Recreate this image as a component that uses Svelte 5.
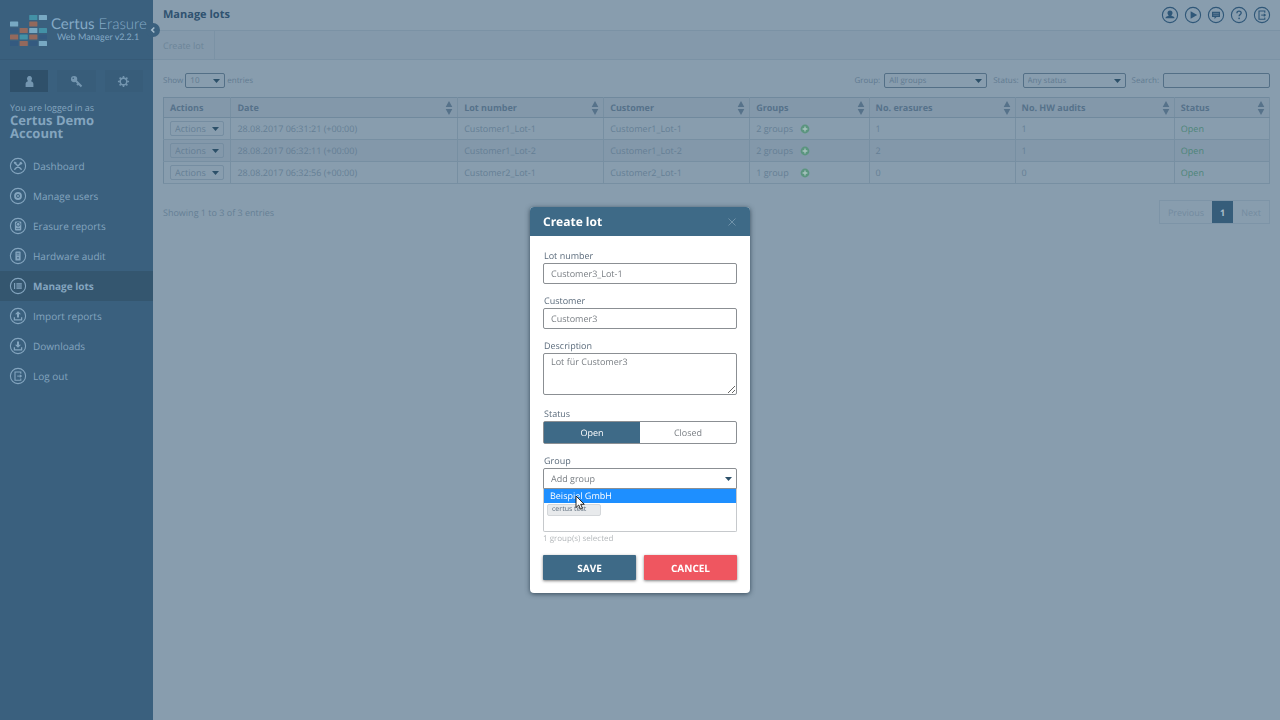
<script>
  const nav = [
    { label: 'Dashboard', icon: 'tools' },
    { label: 'Manage users', icon: 'users' },
    { label: 'Erasure reports', icon: 'drive' },
    { label: 'Hardware audit', icon: 'tower' },
    { label: 'Manage lots', icon: 'lots', active: true },
    { label: 'Import reports', icon: 'upload' },
    { label: 'Downloads', icon: 'download' },
    { label: 'Log out', icon: 'logout' },
  ];

  const topIcons = [
    { label: 'Profile', icon: 'person' },
    { label: 'Videos', icon: 'play' },
    { label: 'Messages', icon: 'chat' },
    { label: 'Help', icon: 'help' },
    { label: 'Log out', icon: 'logout' },
  ];

  const columns = [
    { label: 'Actions', width: 6.1, fixed: true },
    { label: 'Date', width: 20.5 },
    { label: 'Lot number', width: 13.2 },
    { label: 'Customer', width: 13.2 },
    { label: 'Groups', width: 10.8 },
    { label: 'No. erasures', width: 13.2 },
    { label: 'No. HW audits', width: 14.4 },
    { label: 'Status', width: 8.6 },
  ];

  const lots = [
    { date: '28.08.2017 06:31:21 (+00:00)', lot: 'Customer1_Lot-1', customer: 'Customer1_Lot-1', groups: '2 groups', erasures: 1, audits: 1 },
    { date: '28.08.2017 06:32:11 (+00:00)', lot: 'Customer1_Lot-2', customer: 'Customer1_Lot-2', groups: '2 groups', erasures: 2, audits: 1 },
    { date: '28.08.2017 06:32:56 (+00:00)', lot: 'Customer2_Lot-1', customer: 'Customer2_Lot-1', groups: '1 group', erasures: 0, audits: 0 },
  ];

  // column, row, colour
  const bricks = [
    [2, 0, '#4391a6'], [3, 0, '#78a9c3'],
    [0, 1, '#78a9c3'], [2, 1, '#93695d'],
    [0, 2, '#365c80'], [1, 2, '#93695d'], [2, 2, '#78a9c3'], [3, 2, '#4391a6'],
    [0, 3, '#93695d'], [1, 3, '#4391a6'], [2, 3, '#93695d'], [3, 3, '#345a80'],
    [0, 4, '#345a80'], [1, 4, '#93695d'], [2, 4, '#345a80'], [3, 4, '#78a9c3'],
  ];

  let lotNumber = $state('Customer3_Lot-1');
  let customer = $state('Customer3');
  let description = $state('Lot für Customer3');
  let status = $state('open');
</script>

{#snippet glyph(name)}
  <svg class="glyph" viewBox="0 0 18 18" aria-hidden="true">
    <circle cx="9" cy="9" r="7.6" fill="none" stroke="currentColor" stroke-width="1.1" />
    {#if name === 'tools'}
      <path d="M6 6l6.2 6.2M12.2 5.8L5.8 12.2" stroke="currentColor" stroke-width="1.4" stroke-linecap="round" />
      <path d="M4.6 5.6l1.2-1.2 2 1.3-1.6 1.9zM10.6 5.4l1.6-1-.3 1.7 1.7-.2-1.1 1.6-1.6.1z" fill="currentColor" />
    {:else if name === 'users'}
      <circle cx="9" cy="9" r="3.9" fill="currentColor" />
      <circle cx="9" cy="9" r="1.7" fill="#6f93ad" stroke="#3a607e" stroke-width=".8" />
    {:else if name === 'drive'}
      <rect x="5.9" y="4.4" width="6.4" height="9.2" rx="1" fill="currentColor" />
      <circle cx="9.2" cy="7.3" r="1.9" fill="none" stroke="#3a607e" stroke-width=".9" />
      <path d="M7 11.5h4" stroke="#3a607e" stroke-width=".6" />
    {:else if name === 'tower'}
      <rect x="6.4" y="4.4" width="5.2" height="9.2" rx=".6" fill="currentColor" />
      <path d="M7.6 6.4h2.8M7.6 8h2.8" stroke="#3a607e" stroke-width=".7" />
      <circle cx="9" cy="10.8" r=".9" fill="#3a607e" />
    {:else if name === 'lots'}
      <path d="M5.6 6v6" stroke="currentColor" stroke-width="1.1" />
      <path d="M7.4 6h5.4v6H7.4z" fill="currentColor" opacity=".75" />
      <path d="M7.4 8h5.4M7.4 10h5.4" stroke="#34586f" stroke-width=".4" />
    {:else if name === 'upload'}
      <path d="M9 4.2l3 3.1h-2v3.2H8V7.3H6z" fill="currentColor" />
      <path d="M5.4 10.2v2.6h7.2v-2.6" fill="none" stroke="currentColor" stroke-width="1.3" />
    {:else if name === 'download'}
      <path d="M9 10.8l3-3.1h-2V4.4H8v3.3H6z" fill="currentColor" />
      <path d="M5.4 10.2v2.6h7.2v-2.6" fill="none" stroke="currentColor" stroke-width="1.3" />
    {:else if name === 'logout'}
      <path d="M11.8 6.8V5H6v8.2h5.8v-1.8" fill="none" stroke="currentColor" stroke-width="1.1" />
      <path d="M8.2 9.1h3" stroke="currentColor" stroke-width="1" />
      <path d="M10.8 7.3l2.4 1.8-2.4 1.8z" fill="currentColor" />
    {:else if name === 'person'}
      <path d="M9 4.4a2.500 2.500 0 0 1 2.500 2.500c0 1-.5 1.800-1 2.300l.1.800c1.800.2 2.900.8 2.900 2.300h-9c0-1.500 1.100-2.100 2.900-2.300l.1-.8c-.5-.5-1-1.300-1-2.300A2.500 2.500 0 0 1 9 4.400z" fill="currentColor" />
    {:else if name === 'play'}
      <path d="M6.600 5.200L13.200 9l-6.600 3.800z" fill="currentColor" />
    {:else if name === 'chat'}
      <path d="M5 5.800h8v5.200H9.500l-2 1.900V11H5z" fill="currentColor" />
      <path d="M6.200 7.400h5.600M6.200 9.200h5.600" stroke="#889dae" stroke-width=".5" />
    {:else if name === 'help'}
      <path d="M6.900 7.200c0-1.300.9-2 2.100-2s2.200.7 2.200 1.900c0 1.600-2.100 1.500-2.100 3.200" fill="none" stroke="currentColor" stroke-width="1.300" />
      <circle cx="9.100" cy="12.300" r=".85" fill="currentColor" />
    {/if}
  </svg>
{/snippet}

<div class="app">
  <aside class="sidebar">
    <div class="brand">
      <svg class="logo" viewBox="0 0 37 32" aria-hidden="true">
        {#each bricks as [col, row, color]}
          <rect x={col * 9.6} y={row * 6.5} width="8.2" height="5" rx=".6" fill={color} />
        {/each}
      </svg>
      <div class="wordmark">
        <div class="name"><b>Certus</b> Erasure</div>
        <div class="product">Web Manager v2.2.1</div>
      </div>
      <button class="collapse" aria-label="Collapse menu">
        <svg viewBox="0 0 14 14" aria-hidden="true"><path d="M8.300 4.500L5.800 7l2.500 2.500" fill="none" stroke="currentColor" stroke-width="1.600" /></svg>
      </button>
    </div>

    <div class="account">
      <div class="modes">
        <button class="current" aria-label="Account">
          <svg viewBox="0 0 14 14" aria-hidden="true"><path d="M7 1.200a2.700 2.700 0 0 1 2.300 4.200c-.2.500-.5.900-.8 1.200 1.700.4 2.700 1.300 2.700 3V13H2.800V9.600c0-1.700 1-2.600 2.700-3-.3-.3-.6-.7-.8-1.200A2.700 2.700 0 0 1 7 1.200z" fill="currentColor" /></svg>
        </button>
        <button aria-label="Licences">
          <svg viewBox="0 0 14 14" aria-hidden="true">
            <circle cx="4.400" cy="4.400" r="3.400" fill="currentColor" />
            <circle cx="3.500" cy="3.500" r=".9" fill="#3a607e" />
            <path d="M6 6l6.400 6.400M9 9.400l-1.400 1.400" stroke="currentColor" stroke-width="2.200" />
          </svg>
        </button>
        <button aria-label="Settings">
          <svg viewBox="0 0 14 14" aria-hidden="true">
            <circle cx="7" cy="7" r="3.600" fill="none" stroke="currentColor" stroke-width="1.700" />
            <path d="M7 1v2M7 11v2M1 7h2M11 7h2M2.800 2.800l1.400 1.400M9.800 9.800l1.400 1.400M2.800 11.200l1.400-1.400M9.800 4.200l1.400-1.400" stroke="currentColor" stroke-width="1.700" />
          </svg>
        </button>
      </div>
      <p class="logged">You are logged in as</p>
      <p class="user">Certus Demo Account</p>
    </div>

    <nav>
      {#each nav as item}
        <a href="#{item.icon}" class:active={item.active}>
          {@render glyph(item.icon)}
          {item.label}
        </a>
      {/each}
    </nav>
  </aside>

  <main>
    <header>
      <h1>Manage lots</h1>
      <div class="top-icons">
        {#each topIcons as item}
          <button aria-label={item.label}>{@render glyph(item.icon)}</button>
        {/each}
      </div>
    </header>
    <div class="toolbar">
      <button>Create lot</button>
    </div>

    <section class="content">
      <div class="filters">
        <label class="length">
          Show
          <select><option>10</option></select>
          entries
        </label>
        <div class="search">
          <label>Group: <select><option>All groups</option></select></label>
          <label>Status: <select><option>Any status</option></select></label>
          <label>Search: <input type="search" /></label>
        </div>
      </div>

      <table>
        <colgroup>
          {#each columns as column}
            <col style="width: {column.width}%" />
          {/each}
        </colgroup>
        <thead>
          <tr>
            {#each columns as column}
              <th>
                <div class="head">
                  {column.label}
                  {#if !column.fixed}
                    <svg viewBox="0 0 8 14" aria-hidden="true"><path d="M4 0l3.300 6H.7zM4 14l3.300-6H.7z" fill="currentColor" /></svg>
                  {/if}
                </div>
              </th>
            {/each}
          </tr>
        </thead>
        <tbody>
          {#each lots as lot}
            <tr>
              <td><select aria-label="Actions"><option>Actions</option></select></td>
              <td>{lot.date}</td>
              <td>{lot.lot}</td>
              <td>{lot.customer}</td>
              <td>
                <div class="groups">
                  <span>{lot.groups}</span>
                  <button aria-label="Show groups">
                    <svg viewBox="0 0 10 10" aria-hidden="true">
                      <circle cx="5" cy="5" r="4.400" fill="#5b957f" />
                      <path d="M5 2.600v4.800M2.600 5h4.800" stroke="#a9c4c0" stroke-width="1.300" />
                    </svg>
                  </button>
                </div>
              </td>
              <td>{lot.erasures}</td>
              <td>{lot.audits}</td>
              <td class="open">Open</td>
            </tr>
          {/each}
        </tbody>
      </table>

      <div class="footer">
        <span>Showing 1 to 3 of 3 entries</span>
        <div class="pages">
          <button>Previous</button>
          <button class="current">1</button>
          <button>Next</button>
        </div>
      </div>
    </section>
  </main>
</div>

<div class="backdrop">
  <form class="modal" role="dialog" aria-labelledby="modal-title" onsubmit={(e) => e.preventDefault()}>
    <div class="modal-head">
      <h2 id="modal-title">Create lot</h2>
      <button type="button" aria-label="Close">
        <svg viewBox="0 0 10 10" aria-hidden="true"><path d="M1.500 1.500l7 7M8.500 1.500l-7 7" stroke="currentColor" stroke-width="1" /></svg>
      </button>
    </div>
    <div class="modal-body">
      <div class="field">
        <label for="lot-number">Lot number</label>
        <input id="lot-number" type="text" bind:value={lotNumber} />
      </div>
      <div class="field">
        <label for="customer">Customer</label>
        <input id="customer" type="text" bind:value={customer} />
      </div>
      <div class="field">
        <label for="description">Description</label>
        <textarea id="description" bind:value={description}></textarea>
      </div>
      <div class="field">
        <span class="label" id="status-label">Status</span>
        <div class="toggle" role="group" aria-labelledby="status-label">
          <button type="button" class:on={status === 'open'} onclick={() => (status = 'open')}>Open</button>
          <button type="button" class:on={status === 'closed'} onclick={() => (status = 'closed')}>Closed</button>
        </div>
      </div>
      <div class="group">
        <label for="group">Group</label>
        <select id="group"><option>Add group</option></select>
        <div class="picked">
          <ul class="options">
            <li><button type="button">Beispiel GmbH</button></li>
          </ul>
          <span class="tag">certus test</span>
          <svg class="cursor" viewBox="0 0 10 16" aria-hidden="true">
            <path d="M1 1v11.500l2.700-2.500 1.800 4.200 2-.9-1.800-4h3.600z" fill="#fff" stroke="#111" stroke-width=".9" />
          </svg>
        </div>
        <p class="hint">1 group(s) selected</p>
      </div>
      <div class="buttons">
        <button class="save">SAVE</button>
        <button type="button" class="cancel">CANCEL</button>
      </div>
    </div>
  </form>
</div>

<style>
  :global(body) {
    background: #889dae;
    font-family: 'Open Sans', sans-serif;
    font-size: 9px;
    color: #657f95;
    text-rendering: geometricPrecision;
  }

  * {
    box-sizing: border-box;
  }

  h1,
  h2,
  p,
  ul {
    margin: 0;
    padding: 0;
  }

  button,
  input,
  select,
  textarea {
    margin: 0;
    padding: 0;
    border: 0;
    background: none;
    font: inherit;
    color: inherit;
    text-rendering: inherit;
  }

  svg {
    display: block;
  }

  select {
    appearance: none;
    background: url("data:image/svg+xml,%3Csvg xmlns='http://www.w3.org/2000/svg' viewBox='0 0 7 4'%3E%3Cpath d='M0 0h7L3.500 4z' fill='%232c5069'/%3E%3C/svg%3E") no-repeat right 4px center / 7px 4px;
  }

  .app {
    display: flex;
    min-height: 100vh;
  }

  .sidebar {
    flex: 0 0 153px;
    min-width: 0;
    background: #3a607e;
    color: #84a5bf;
  }

  .brand {
    position: relative;
    display: flex;
    gap: 4px;
    height: 60px;
    padding: 15px 0 0 10px;
    border-bottom: 1px solid #365a77;
  }

  .logo {
    flex: none;
    width: 37px;
    height: 32px;
  }

  .wordmark {
    color: #84a9c5;
    font-family: Lato, sans-serif;
    white-space: nowrap;
  }

  .name {
    font-size: 15px;
    font-weight: 300;
    line-height: 18px;
  }

  .product {
    padding-left: 6px;
    font-size: 9px;
    line-height: 8px;
  }

  .collapse {
    position: absolute;
    top: 23px;
    right: -7px;
    width: 14px;
    height: 14px;
    border-radius: 50%;
    background: #3a607e;
    color: #a5bccd;
  }

  .account {
    padding: 10px 10px 11px;
  }

  .modes {
    display: flex;
    justify-content: space-between;
    gap: 9px;
    margin-bottom: 10px;
  }

  .modes button {
    display: grid;
    place-items: center;
    flex: 1;
    height: 22px;
    background: #385d7a;
    color: #7496b0;
  }

  .modes .current {
    background: #2f506a;
  }

  .modes svg {
    width: 13px;
    height: 13px;
  }

  .logged {
    line-height: 12px;
  }

  .user {
    width: 110px;
    font-size: 13px;
    font-weight: 700;
    line-height: 13px;
  }

  nav a {
    display: flex;
    align-items: center;
    gap: 6px;
    height: 30px;
    padding-left: 9px;
    font-size: 10px;
    color: inherit;
    text-decoration: none;
  }

  nav .active {
    background: #34566f;
    font-weight: 700;
  }

  .glyph {
    width: 18px;
    height: 18px;
  }

  main {
    flex: 1;
    min-width: 0;
  }

  header {
    display: flex;
    align-items: center;
    justify-content: space-between;
    height: 31px;
    padding: 0 9px 0 10px;
    border-bottom: 1px solid #7b92a5;
  }

  h1 {
    font-size: 11px;
    line-height: 16px;
    color: #2f5270;
  }

  .top-icons {
    display: flex;
    gap: 5px;
    color: #2f5778;
  }

  .toolbar {
    height: 29px;
    background: #8499ab;
    border-bottom: 1px solid #7b92a5;
  }

  .toolbar button {
    height: 100%;
    padding: 0 10px;
    border-right: 1px solid #7b92a5;
    color: #6c8599;
  }

  .content {
    padding: 13px 10px;
  }

  .filters,
  .search,
  .filters label,
  .footer,
  .pages {
    display: flex;
    align-items: center;
  }

  .filters {
    justify-content: space-between;
    margin-bottom: 9px;
    font-size: 8px;
    color: #617b91;
  }

  .filters label {
    gap: 4px;
  }

  .filters .length {
    gap: 2px;
  }

  .search {
    gap: 6px;
  }

  .filters select,
  .filters input {
    width: 103px;
    height: 15px;
    padding-left: 4px;
    border: 1px solid #536f86;
    border-radius: 2px;
  }

  .filters input {
    width: 107px;
  }

  .filters .length select {
    width: 40px;
  }

  table {
    width: 100%;
    table-layout: fixed;
    border-collapse: collapse;
    border: 1px solid #70899d;
  }

  th,
  td {
    height: 22px;
    padding: 0 6px;
    border-right: 1px solid #778fa2;
    border-bottom: 1px solid #778fa2;
    text-align: left;
    white-space: nowrap;
  }

  th {
    height: 20px;
    padding-right: 4px;
    background: #8398aa;
    border-bottom-color: #70899d;
    color: #56728a;
  }

  tr:nth-child(even) td {
    background: #8398aa;
  }

  .head {
    display: flex;
    align-items: center;
    justify-content: space-between;
    height: 14px;
  }

  .head svg {
    width: 8px;
    height: 14px;
  }

  td select {
    display: block;
    width: 54px;
    height: 15px;
    padding-left: 4px;
    border: 1px solid #758da1;
    border-radius: 2px;
  }

  .groups {
    display: flex;
    align-items: center;
  }

  .groups span {
    width: 44px;
  }

  .groups svg {
    width: 10px;
    height: 10px;
  }

  td.open {
    color: #4d8578;
  }

  .footer {
    justify-content: space-between;
    margin-top: 16px;
  }

  .pages {
    border: 1px solid #7d94a7;
  }

  .pages button {
    height: 22px;
    padding: 0 8px;
    color: #738ba0;
  }

  .pages .current {
    background: #365d7a;
    color: #a9bccb;
    font-weight: 700;
  }

  .backdrop {
    position: fixed;
    inset: 0;
    display: grid;
    place-items: center;
    padding-top: 80px;
  }

  .modal {
    width: 220px;
    border-radius: 4px;
    background: #fff;
    box-shadow: 0 1px 5px rgba(20, 40, 55, 0.7);
    color: #5d6d7d;
  }

  .modal-head {
    display: flex;
    align-items: center;
    justify-content: space-between;
    height: 29px;
    padding: 0 13px;
    border-radius: 4px 4px 0 0;
    background: #3e6a87;
    color: #fff;
  }

  h2 {
    font-size: 12px;
    line-height: 16px;
  }

  .modal-head button {
    color: #6f92a9;
  }

  .modal-head svg {
    width: 10px;
    height: 10px;
  }

  .modal-body {
    padding: 13px;
  }

  .field {
    margin-bottom: 10px;
  }

  .modal-body label,
  .label {
    display: block;
    padding-left: 1px;
    line-height: 14px;
  }

  .field input,
  .field textarea,
  .group select {
    display: block;
    width: 100%;
    height: 21px;
    padding: 0 7px;
    border: 1px solid #8b8f93;
    border-radius: 2px;
    color: #7a7f84;
  }

  .field textarea {
    height: 42px;
    margin-bottom: 12px;
    padding-top: 2px;
    line-height: 12px;
  }

  .toggle {
    display: flex;
    height: 23px;
    border: 1px solid #8b8f93;
    border-radius: 2px;
  }

  .toggle button {
    flex: 1;
    color: #7a7f84;
  }

  .toggle .on {
    background: #3e6a87;
    color: #fff;
  }

  .group select {
    border-radius: 2px 2px 0 0;
  }

  .picked {
    position: relative;
    height: 43px;
    border: 1px solid #c6c9cc;
    border-top: 0;
    border-radius: 0 0 2px 2px;
  }

  .options {
    list-style: none;
  }

  .options button {
    display: block;
    width: 100%;
    height: 14px;
    padding-left: 6px;
    background: #1e8fff;
    color: #fff;
    line-height: 14px;
    text-align: left;
  }

  .tag {
    display: block;
    width: 54px;
    height: 12px;
    margin: 1px 0 0 3px;
    padding-left: 4px;
    border: 1px solid #d4d7da;
    border-radius: 2px;
    background: #e8eaec;
    font-size: 7px;
    line-height: 10px;
  }

  .cursor {
    position: absolute;
    top: 6px;
    left: 31px;
    width: 10px;
    height: 16px;
  }

  .hint {
    font-size: 8px;
    line-height: 14px;
    color: #b4b8bb;
  }

  .buttons {
    display: flex;
    gap: 8px;
    margin-top: 9px;
  }

  .buttons button {
    flex: 1;
    height: 25px;
    border-radius: 1px;
    background: #3e6a87;
    box-shadow: 0 1px 3px rgba(0, 0, 0, 0.5);
    color: #fff;
    font-size: 10px;
    font-weight: 700;
  }

  .buttons .cancel {
    background: #ef5660;
  }
</style>
